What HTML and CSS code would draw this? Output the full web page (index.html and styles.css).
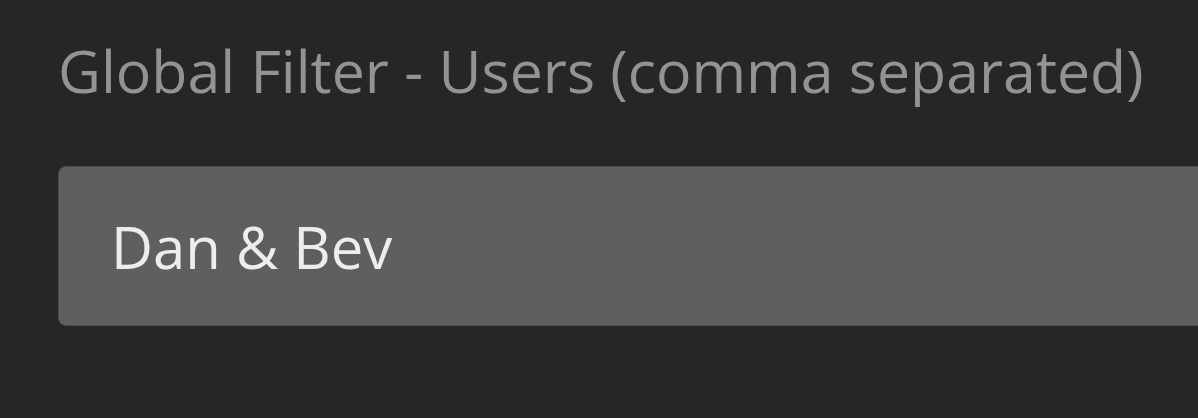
FILE: index.html
```html
<!DOCTYPE html>
<html>
<head>
<meta charset="utf-8">
<link rel="stylesheet" href="styles.css">
</head>
<body>
<div class="field">
  <label class="field-label" for="users">Global Filter - Users (comma separated)</label>
  <input class="field-input" id="users" type="text" value="Dan &amp; Bev">
</div>
</body>
</html>
```

FILE: styles.css
```css
html, body {
  margin: 0;
  padding: 0;
  background: #262626;
  overflow: hidden;
  height: 100%;
}
.field {
  display: flex;
  flex-direction: column;
  padding: 30px 0 0 58px;
  font-family: "Open Sans", "Noto Sans", sans-serif;
}
.field-label {
  font-size: 59px;
  line-height: 80px;
  color: #939393;
  white-space: nowrap;
}
.field-input {
  margin-top: 56px;
  width: 1300px;
  height: 160px;
  box-sizing: border-box;
  border: 1px solid #4d4d4d;
  border-radius: 8px;
  background: #5f5f5f;
  color: #ededed;
  font-family: "Open Sans", "Noto Sans", sans-serif;
  font-size: 58px;
  line-height: 79px;
  padding: 0 0 0 52px;
  outline: none;
}
```
